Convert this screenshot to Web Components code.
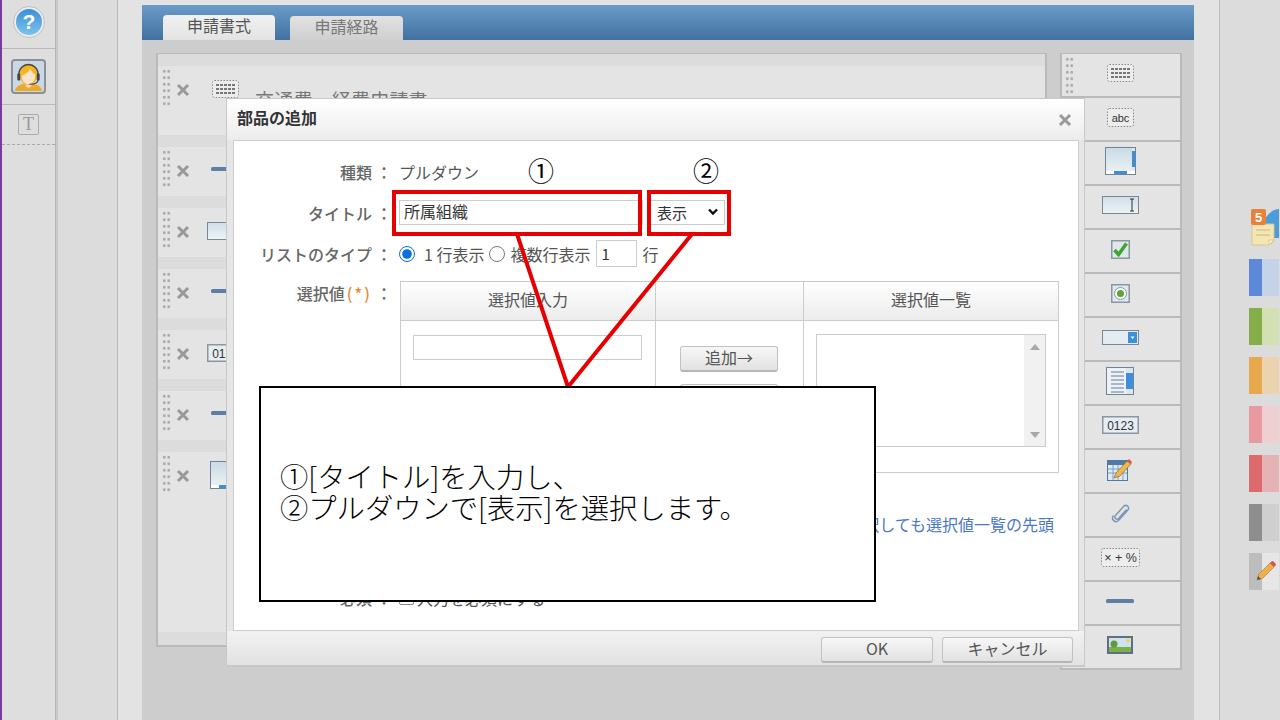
<!DOCTYPE html>
<html lang="ja">
<head>
<meta charset="utf-8">
<title>部品の追加</title>
<style>
  html, body { margin: 0; height: 720px; overflow: hidden; }
  body {
    display: flex;
    position: relative;
    width: 1280px;
    background: #dcdcdc;
    font-family: "Noto Sans CJK JP", "Noto Sans", sans-serif;
    font-size: 16px;
    color: #555;
  }
</style>
</head>
<body>
  <side-rail></side-rail>
  <work-space>
    <form-panel></form-panel>
    <parts-palette></parts-palette>
  </work-space>
  <tile-dock></tile-dock>
  <parts-dialog></parts-dialog>
  <note-overlay>①[タイトル]を入力し、<br>②プルダウンで[表示]を選択します。</note-overlay>

<script>
// icons shared by the form rows and the palette
const ICONS = {
  form: `<svg width="27" height="18" viewBox="0 0 27 18"><rect x=".5" y=".5" width="26" height="17" rx="2" fill="#ededed" stroke="#888" stroke-dasharray="1.5 1.5"/><path d="M4 5h19M4 9h19M4 13h19" stroke="#777" stroke-width="2" stroke-dasharray="3 1"/></svg>`,
  abc: `<svg width="27" height="19" viewBox="0 0 27 19"><rect x=".5" y=".5" width="26" height="18" rx="2" fill="#ededed" stroke="#888" stroke-dasharray="1.5 1.5"/><text x="13.5" y="13.5" text-anchor="middle" font-family="Liberation Sans" font-size="11" fill="#333">abc</text></svg>`,
  area: `<svg width="31" height="28" viewBox="0 0 31 28"><defs><linearGradient id="g" x1="0" y1="0" x2="0" y2="1"><stop offset="0" stop-color="#c9dbe6"/><stop offset="1" stop-color="#eef3f5"/></linearGradient></defs><rect x=".5" y=".5" width="30" height="27" fill="url(#g)" stroke="#6f8296"/><rect x="27" y="1" width="3" height="22" fill="#dfe8ee"/><rect x="27" y="4" width="3" height="16" fill="#3f8fd8"/><rect x="1" y="24" width="29" height="3" fill="#fff"/><rect x="9" y="24" width="13" height="3" fill="#3f8fd8"/></svg>`,
  input: `<svg width="37" height="18" viewBox="0 0 37 18"><defs><linearGradient id="g" x1="0" y1="0" x2="0" y2="1"><stop offset="0" stop-color="#cfdfe8"/><stop offset="1" stop-color="#eef3f5"/></linearGradient></defs><rect x=".5" y=".5" width="36" height="17" fill="url(#g)" stroke="#7a8794"/><path d="M28 3h4M28 15h4M30 3v12" stroke="#333" fill="none"/></svg>`,
  check: `<svg width="19" height="19" viewBox="0 0 19 19"><rect x=".75" y=".75" width="17.5" height="17.5" fill="#dfe8ee" stroke="#8a96a0" stroke-width="1.5"/><path d="M3.500 10l4 4.500 8-11" fill="none" stroke="#3fa52c" stroke-width="3.500"/></svg>`,
  radio: `<svg width="19" height="19" viewBox="0 0 19 19"><rect x=".75" y=".75" width="17.5" height="17.5" fill="#dfe8ee" stroke="#8a96a0" stroke-width="1.5"/><circle cx="9.5" cy="9.5" r="6" fill="#fff" stroke="#8a98a6"/><circle cx="9.5" cy="9.5" r="3.5" fill="#5aa832"/></svg>`,
  drop: `<svg width="37" height="15" viewBox="0 0 37 15"><rect x=".5" y=".5" width="36" height="14" fill="#e4ecf1" stroke="#7a8794"/><rect x="26" y="2" width="9" height="11" fill="#3f8fd8"/><path d="M28.500 6.500h4l-2 2.500z" fill="#fff"/></svg>`,
  list: `<svg width="28" height="28" viewBox="0 0 28 28"><rect x=".5" y=".5" width="27" height="27" fill="#eef2f5" stroke="#6f8296"/><path d="M5 5h13M5 9h13M5 13h13M5 17h13M5 21h13M5 25h13" stroke="#5c7da0"/><rect x="20" y="1" width="7" height="26" fill="#dce6ee"/><rect x="20" y="6" width="7" height="16" fill="#3f8fd8"/></svg>`,
  num: `<svg width="37" height="18" viewBox="0 0 37 18"><rect x=".75" y=".75" width="35.500" height="16.500" fill="#e6eef3" stroke="#8a96a0" stroke-width="1.5"/><text x="18.500" y="13.500" text-anchor="middle" font-family="Liberation Sans" font-size="12" fill="#333">0123</text></svg>`,
  date: `<svg width="26" height="24" viewBox="0 0 26 24"><rect x=".5" y="3.500" width="20" height="20" fill="#dfe9f2" stroke="#4f7aa5"/><rect x="1" y="3" width="20" height="5" fill="#4f7aa5"/><path d="M1 12h19M1 16h19M6 8v15M11 8v15M16 8v15" stroke="#7fa0c0"/><path d="M7 21l2-5L20 4l4 3-11 12z" fill="#edb84e" stroke="#8a6a2a" stroke-width=".7"/><path d="M20 4l2-2 3 3-1 2z" fill="#d9534f"/></svg>`,
  clip: `<svg width="19" height="21" viewBox="0 0 19 21"><path d="M15 6L7 15c-2 2-5-1-3-3l8-9c3-3 7 1 4 4l-9 10c-3 3-8-1-5-5" transform="translate(.5 .5)" fill="none" stroke="#7f98b4" stroke-width="1.500"/></svg>`,
  calc: `<svg width="39" height="19" viewBox="0 0 39 19"><rect x=".5" y=".5" width="38" height="18" rx="2" fill="#ededed" stroke="#888" stroke-dasharray="1.5 1.5"/><text x="19.500" y="14" text-anchor="middle" font-family="Liberation Sans" font-size="12.500" fill="#333">× + %</text></svg>`,
  line: `<svg width="28" height="6" viewBox="0 0 28 6"><rect y="1" width="28" height="4" rx="1.500" fill="#5d7fa6"/></svg>`,
  image: `<svg width="26" height="18" viewBox="0 0 26 18"><rect x="1" y="1" width="24" height="16" fill="#cfe3ef" stroke="#5d6f80" stroke-width="2"/><rect x="2" y="11" width="22" height="5" fill="#7ab04a"/><circle cx="7" cy="8" r="3.500" fill="#5f9a3c"/><circle cx="21" cy="4.500" r="1.800" fill="#f3d24a"/></svg>`,
};

class PartIcon extends HTMLElement {
  constructor() {
    super();
    this._root = this.attachShadow({ mode: "open" });
    this._root.innerHTML = `
      <style>:host { display: flex; flex: none; } svg { display: block; }</style>
      ${ICONS[this.getAttribute("name")] || ""}`;
  }
}

class SideRail extends HTMLElement {
  constructor() {
    super();
    this._root = this.attachShadow({ mode: "open" });
    this._root.innerHTML = `
      <style>
        :host {
          display: flex; flex-direction: column; flex: none;
          width: 53px; height: 720px;
          border-left: 2px solid #7a3a98;
          background: #dedede;
          box-shadow: 1px 0 0 #b5b5b5, 3px 0 0 #c8c8c8;
          margin-right: 3px;
        }
        .cell { display: flex; align-items: center; justify-content: center; border-bottom: 1px solid #b9b9b9; }
        .help { height: 44px; padding-bottom: 4px; }
        .face { height: 55px; }
        .text { height: 39px; border-bottom: 1px dashed #aaa; }
        .t {
          width: 19px; height: 19px; border: 1px solid #aaa; border-radius: 2px;
          font: 18px/19px "Liberation Serif", serif; color: #999; text-align: center;
        }
      </style>
      <div class="cell help">
        <svg width="32" height="32" viewBox="0 0 32 32">
          <defs><linearGradient id="b" x1="0" y1="0" x2="0" y2="1"><stop offset="0" stop-color="#3b8fd6"/><stop offset="1" stop-color="#7cc2ee"/></linearGradient></defs>
          <circle cx="16" cy="16" r="15.500" fill="#ececec" stroke="#c0c0c0"/>
          <circle cx="16" cy="16" r="13" fill="url(#b)"/>
          <text x="16" y="23" text-anchor="middle" font-family="Liberation Sans" font-weight="bold" font-size="21" fill="#fff">?</text>
        </svg>
      </div>
      <div class="cell face">
        <svg width="35" height="35" viewBox="0 0 36 36">
          <rect x="1" y="1" width="34" height="34" rx="3" fill="#c9d8e4" stroke="#8a8f94" stroke-width="2"/>
          <path d="M4 33c1-6 8-8 14-8s13 2 14 8z" fill="#eda928"/>
          <path d="M15 23h6v5l-3 2-3-2z" fill="#f9dcc4"/>
          <ellipse cx="18" cy="16" rx="9" ry="11" fill="#f6b51f"/>
          <path d="M11 17c3-1 7-3 9-7 1 3 3 5 5 6 0 6-3 10-7 10s-7-4-7-9z" fill="#fbe3cf"/>
          <path d="M8 17c0-15 20-15 20 0" fill="none" stroke="#444" stroke-width="1.500"/>
          <rect x="6.500" y="15" width="3" height="7" rx="1" fill="#444"/>
          <rect x="26.500" y="15" width="3" height="7" rx="1" fill="#444"/>
          <path d="M28 21c0 4-4 5-9 5" fill="none" stroke="#444" stroke-width="1.200"/>
        </svg>
      </div>
      <div class="cell text"><div class="t">T</div></div>`;
  }
}

class WorkSpace extends HTMLElement {
  constructor() {
    super();
    this._root = this.attachShadow({ mode: "open" });
    this._root.innerHTML = `
      <style>
        :host {
          display: block; flex: none;
          box-sizing: border-box;
          width: 1103px; height: 720px;
          margin-left: 59px;
          padding: 5px 25px 0 24px;
          background: #e3e3e3;
          border-left: 1px solid #bbb;
          border-right: 1px solid #bbb;
        }
        .panel { height: 715px; background: #cdcdcd; }
        .bar {
          display: flex; align-items: flex-end; gap: 15px;
          box-sizing: border-box; height: 35px; padding-left: 21px;
          background: linear-gradient(#6b9cc8, #41719f);
        }
        .tab {
          box-sizing: border-box; width: 112px; height: 25px;
          border-radius: 4px 4px 0 0;
          background: linear-gradient(#f1f1f1, #e3e3e3);
          text-align: center; font-size: 16px; line-height: 21px; color: #555;
        }
        .tab.off { width: 113px; height: 24px; line-height: 20px; background: linear-gradient(#e2e2e2, #cfcfcf); color: #777; }
        .body { display: flex; gap: 13px; padding: 13px 13px 0 14px; align-items: flex-start; }
      </style>
      <div class="panel">
        <div class="bar"><div class="tab">申請書式</div><div class="tab off">申請経路</div></div>
        <div class="body"><slot></slot></div>
      </div>`;
  }
}

class FormRow extends HTMLElement {
  constructor() {
    super();
    this._root = this.attachShadow({ mode: "open" });
    this._root.innerHTML = `
      <style>
        :host { display: block; box-sizing: border-box; background: #e4e4e4; height: 49px; position: relative; padding: 2px 0 0 4px; }
        .line { display: flex; align-items: flex-start; }
        .grip {
          flex: none; width: 9px; height: 39px;
          background: radial-gradient(circle, #a8a8a8 1.2px, transparent 1.5px) 0 0 / 4.5px 6.5px;
        }
        .x { flex: none; margin: 15px 0 0 5px; width: 14px; height: 14px; }
        .icon { flex: none; margin-left: var(--icon-gap, 21px); margin-top: var(--icon-top, 0); }
        .name { margin: 20px 0 0 16px; font-size: 19px; line-height: 24px; white-space: nowrap; color: #777; letter-spacing: .2px; }
      </style>
      <div class="line">
        <div class="grip"></div>
        <svg class="x" viewBox="0 0 14 14"><path d="M2 2l10 10M12 2L2 12" stroke="#999" stroke-width="3"/></svg>
        <div class="icon"><slot name="icon"></slot></div>
        <div class="name"><slot></slot></div>
      </div>`;
  }
}

class FormPanel extends HTMLElement {
  constructor() {
    super();
    this._root = this.attachShadow({ mode: "open" });
    this._root.innerHTML = `
      <style>
        :host {
          display: flex; flex-direction: column; gap: 12px; flex: none;
          box-sizing: border-box; width: 891px; height: 594px;
          padding-top: 12px;
          background: #dcdcdc;
          border: solid #bababa; border-width: 1px 2px 2px 2px;
        }
      </style>
      <form-row style="height:69px;--icon-gap:22px;--icon-top:12px"><part-icon slot="icon" name="form"></part-icon>交通費　経費申請書</form-row>
      <form-row style="--icon-top:17px"><part-icon slot="icon" name="line"></part-icon></form-row>
      <form-row style="--icon-gap:17px;--icon-top:12px"><part-icon slot="icon" name="input"></part-icon></form-row>
      <form-row style="--icon-top:17px"><part-icon slot="icon" name="line"></part-icon></form-row>
      <form-row style="--icon-gap:17px;--icon-top:12px"><part-icon slot="icon" name="num"></part-icon></form-row>
      <form-row style="--icon-top:17px"><part-icon slot="icon" name="line"></part-icon></form-row>
      <form-row style="height:180px;--icon-gap:20px;--icon-top:7px"><part-icon slot="icon" name="area"></part-icon></form-row>`;
  }
}

class PartsPalette extends HTMLElement {
  constructor() {
    super();
    this._root = this.attachShadow({ mode: "open" });
    const names = ["form", "abc", "area", "input", "check", "radio", "drop", "list", "num", "date", "clip", "calc", "line", "image"];
    this._root.innerHTML = `
      <style>
        :host {
          display: grid; grid-auto-rows: 44px; flex: none;
          box-sizing: border-box; width: 122px; height: 617px;
          background: #e4e4e4;
          border: solid #bababa; border-width: 1px 2px 0 2px;
        }
        .item {
          position: relative; box-sizing: border-box; padding: 0 2px 4px 0;
          display: flex; align-items: center; justify-content: center;
          border-bottom: 2px solid #bababa;
        }
        .grip {
          position: absolute; left: 3px; top: 2px; width: 9px; height: 39px;
          background: radial-gradient(circle, #a8a8a8 1.2px, transparent 1.5px) 0 0 / 4.5px 6.5px;
        }
      </style>
      ${names.map((n, i) => `<div class="item">${i === 0 ? '<div class="grip"></div>' : ""}<part-icon name="${n}"></part-icon></div>`).join("")}`;
  }
}

class TileDock extends HTMLElement {
  constructor() {
    super();
    this._root = this.attachShadow({ mode: "open" });
    const tiles = [
      ["#5e88d8", "#c5d3e9"], ["#85ae4a", "#d3e0b4"], ["#e6a84e", "#ecd3b0"],
      ["#e89aa0", "#eed0d2"], ["#dd6a6c", "#e5b3b5"], ["#8e8e8e", "#cfcfcf"],
    ];
    this._root.innerHTML = `
      <style>
        :host {
          display: flex; flex-direction: column; gap: 12px; flex: none;
          box-sizing: border-box; width: 59px; height: 720px;
          padding: 208px 0 0 29px;
          background: #dcdcdc; overflow: hidden;
        }
        .note { width: 30px; height: 38px; margin-bottom: 1px; }
        .tile { position: relative; display: flex; width: 30px; height: 37px; flex: none; }
        .tile i { width: 13px; }
        .tile b { flex: 1; }
        .pen { position: absolute; left: 7px; top: 8px; }
        svg { display: block; }
      </style>
      <div class="note">
        <svg width="30" height="38" viewBox="0 0 30 38">
          <path d="M12 30C12 10 22 1 30 1v29z" fill="#4c9bdc"/>
          <path d="M3 16h22v17l-5 4H3z" fill="#f3e6b4" stroke="#d8c68c"/>
          <path d="M7 22h14M7 27h14" stroke="#c9b77c"/>
          <path d="M20 37v-5h5z" fill="#fff8dc" stroke="#d8c68c"/>
          <rect x="2" y="1" width="15" height="16" rx="2" fill="#e8813a"/>
          <text x="9.500" y="14" text-anchor="middle" font-family="Liberation Sans" font-weight="bold" font-size="13" fill="#fff">5</text>
        </svg>
      </div>
      ${tiles.map(([a, b]) => `<div class="tile"><i style="background:${a}"></i><b style="background:${b}"></b></div>`).join("")}
      <div class="tile"><i style="background:#bdbdbd"></i><b style="background:#e6e6e6"></b>
        <svg class="pen" width="20" height="20" viewBox="0 0 20 20">
          <path d="M1 19l1.500-5.500L14 2l4 4L6.500 17.500z" fill="#eeb04c" stroke="#a87a2a" stroke-width=".6"/>
          <path d="M14 2l1.500-1.500a1.500 1.500 0 0 1 2 0l2 2a1.500 1.500 0 0 1 0 2L18 6z" fill="#d9534f"/>
          <path d="M1 19l1-4 3 3z" fill="#555"/>
        </svg>
      </div>`;
  }
}

class AddRow extends HTMLElement {
  constructor() {
    super();
    this._root = this.attachShadow({ mode: "open" });
    this._root.innerHTML = `
      <style>
        :host { display: grid; grid-template-columns: 165px 1fr; align-items: center; min-height: 41px; }
        :host([top]) { align-items: start; }
        .label { display: flex; justify-content: flex-end; align-items: center; padding-right: 7px; font-size: 16px; font-weight: 500; color: #666; white-space: nowrap; }
        .colon { width: 16px; margin-left: 4px; text-align: center; }
        .value { display: flex; align-items: center; min-width: 0; }
      </style>
      <div class="label"><span><slot name="label"></slot></span><span class="colon">：</span></div>
      <div class="value"><slot></slot></div>`;
  }
}

class FakeInput extends HTMLElement {
  constructor() {
    super();
    this._root = this.attachShadow({ mode: "open" });
    this._root.innerHTML = `
      <style>
        :host {
          display: block; box-sizing: border-box; height: 25px; flex: none;
          border: 1px solid #ccc; background: #fff;
          padding-left: 4px; font-size: 16px; line-height: 21px; color: #333;
        }
      </style>
      <slot></slot>`;
  }
}

class PlainButton extends HTMLElement {
  constructor() {
    super();
    this._root = this.attachShadow({ mode: "open" });
    this._root.innerHTML = `
      <style>
        :host {
          display: block; box-sizing: border-box; flex: none; height: 26px;
          border: 1px solid #c2c2c2; border-bottom: 2px solid #b5b5b5; border-radius: 3px;
          background: linear-gradient(#f7f7f7, #e2e2e2);
          text-align: center; font-size: 16px; line-height: 20px; color: #555;
        }
      </style>
      <slot></slot>`;
  }
}

class PickTable extends HTMLElement {
  constructor() {
    super();
    this._root = this.attachShadow({ mode: "open" });
    this._root.innerHTML = `
      <style>
        :host {
          display: grid; grid-template-columns: 255px 148px 1fr; grid-template-rows: 39px 1fr;
          box-sizing: border-box; width: 659px; height: 192px; margin-left: 1px;
          border: 1px solid #ccc;
        }
        .head {
          border-bottom: 1px solid #ccc; border-right: 1px solid #ccc;
          background: linear-gradient(#fff, #ececec);
          text-align: center; font-size: 16px; line-height: 35px; color: #555;
        }
        .head.end { border-right: 0; }
        .cell { border-right: 1px solid #ccc; }
        .left { padding: 14px 0 0 12px; }
        .left fake-input { width: 229px; }
        .mid { display: flex; flex-direction: column; gap: 12px; padding: 25px 0 0 24px; }
        .mid plain-button { width: 98px; }
        .right { border-right: 0; padding: 13px 12px 0 12px; }
        .list { display: flex; justify-content: flex-end; box-sizing: border-box; height: 113px; border: 1px solid #ccc; }
        .scroll { width: 21px; background: #f1f1f1; display: flex; flex-direction: column; justify-content: space-between; padding: 9px 0 8px; box-sizing: border-box; align-items: center; }
        .scroll svg { display: block; }
      </style>
      <div class="head">選択値入力</div><div class="head"></div><div class="head end">選択値一覧</div>
      <div class="cell left"><fake-input></fake-input></div>
      <div class="cell mid"><plain-button>追加→</plain-button><plain-button>←削除</plain-button></div>
      <div class="cell right">
        <div class="list"><div class="scroll">
          <svg width="10" height="6"><path d="M5 0l5 6H0z" fill="#a8a8a8"/></svg>
          <svg width="10" height="6"><path d="M0 0h10L5 6z" fill="#a8a8a8"/></svg>
        </div></div>
      </div>`;
  }
}

class PartsDialog extends HTMLElement {
  constructor() {
    super();
    this._root = this.attachShadow({ mode: "open" });
    this._root.innerHTML = `
      <style>
        :host {
          position: absolute; left: 226px; top: 98px;
          display: flex; flex-direction: column;
          box-sizing: border-box; width: 859px; height: 569px;
          border: 1px solid #c8c8c8; border-bottom-width: 2px;
          background: #e6e6e6;
        }
        .title {
          display: flex; justify-content: space-between; align-items: center; flex: none;
          box-sizing: border-box; height: 41px; padding: 0 12px 5px 10px;
          background: linear-gradient(#fff, #ececec);
          font-size: 16px; font-weight: 700; color: #333;
        }
        .title svg { margin-top: 6px; }
        .body {
          flex: none; box-sizing: border-box; height: 491px; margin: 0 5px 0 6px;
          padding-top: 10px;
          background: #fff; border: 1px solid #ccc;
        }
        .gap { height: 7px; }
        .row-blue { display: flex; justify-content: flex-end; padding-right: 24px; margin-top: 40px; font-size: 16px; line-height: 22px; color: #4a78c8; white-space: nowrap; }
        .foot { display: flex; justify-content: flex-end; gap: 9px; padding: 6px 11px 0 0; flex: 1; background: linear-gradient(#f2f2f2, #e2e2e2); }
        .foot plain-button:first-child { width: 112px; }
        .foot plain-button:last-child { width: 131px; }
        .title-field { width: 244px; }
        .sel { position: relative; flex: none; margin-left: 6px; }
        .sel svg { position: absolute; right: 7px; top: 8px; }
        select {
          display: block; width: 76px; height: 25px; box-sizing: border-box;
          appearance: none;
          border: 1px solid #ccc; border-radius: 0; background: #fff; padding: 0 0 0 7px;
          font: 15px "Noto Sans CJK JP", sans-serif; color: #333;
        }
        input[type=radio] { margin: 0; width: 16px; height: 16px; flex: none; accent-color: #0a6fe0; }
        .opts { font-size: 16px; color: #555; white-space: nowrap; }
        .num { width: 41px; height: 27px; margin: 0 5px 0 6px; font-size: 15px; line-height: 25px; }
        .req { color: #e98a3a; margin-left: 2px; letter-spacing: 2px; }
        .check { display: flex; align-items: center; gap: 3px; font-size: 16px; color: #555; }
        .check i { display: block; width: 13px; height: 13px; border: 1px solid #888; border-radius: 2px; background: #fff; }
      </style>
      <div class="title">部品の追加
        <svg width="14" height="14" viewBox="0 0 14 14"><path d="M2 2l10 10M12 2L2 12" stroke="#999" stroke-width="3"/></svg>
      </div>
      <div class="body">
        <add-row><span slot="label">種類</span>プルダウン</add-row>
        <add-row><span slot="label">タイトル</span>
          <fake-input class="title-field">所属組織</fake-input>
          <span class="sel">
            <select><option>表示</option><option>非表示</option></select>
            <svg width="10" height="8" viewBox="0 0 10 8"><path d="M1 1.500l4 4 4-4" fill="none" stroke="#111" stroke-width="2.400"/></svg>
          </span>
        </add-row>
        <add-row><span slot="label">リストのタイプ</span>
          <input type="radio" name="kind" checked>
          <span class="opts" style="margin:0 5px 0 9px">1 行表示</span>
          <input type="radio" name="kind">
          <span class="opts" style="margin-left:5px">複数行表示</span>
          <fake-input class="num">1</fake-input>
          <span class="opts">行</span>
        </add-row>
        <div class="gap"></div>
        <add-row top><span slot="label">選択値<span class="req">(*)</span></span><pick-table></pick-table></add-row>
        <div class="row-blue">値を選択しても選択値一覧の先頭</div>
        <add-row style="margin-top:42px"><span slot="label">必須</span><span class="check"><i></i>入力を必須にする</span></add-row>
      </div>
      <div class="foot"><plain-button>OK</plain-button><plain-button>キャンセル</plain-button></div>`;
  }
}

// callout box, red frames and the two leader lines, all on top of the dialog
class NoteOverlay extends HTMLElement {
  constructor() {
    super();
    this._root = this.attachShadow({ mode: "open" });
    this._root.innerHTML = `
      <style>
        :host { position: absolute; left: 0; top: 0; width: 1280px; height: 720px; pointer-events: none; }
        .frame { position: absolute; box-sizing: border-box; top: 190px; height: 46px; border: 4px solid #e60000; }
        .num { position: absolute; top: 152px; width: 32px; text-align: center; font-size: 26px; line-height: 36px; color: #000; }
        svg { position: absolute; left: 0; top: 0; }
        .box {
          position: absolute; left: 259px; top: 386px;
          box-sizing: border-box; width: 617px; height: 216px;
          display: flex; align-items: center;
          padding: 0 0 7px 19px;
          border: 2px solid #000; background: #fff;
          font-size: 28.300px; font-weight: 300; line-height: 31px; color: #000; white-space: nowrap;
        }
      </style>
      <svg width="1280" height="720"><path d="M517 234l51 153 124-153" fill="none" stroke="#e60000" stroke-width="4"/></svg>
      <div class="frame" style="left:392px;width:250px"></div>
      <div class="frame" style="left:647px;width:84px"></div>
      <div class="num" style="left:525px">①</div>
      <div class="num" style="left:690px">②</div>
      <div class="box"><div><slot></slot></div></div>`;
  }
}

customElements.define("part-icon", PartIcon);
customElements.define("side-rail", SideRail);
customElements.define("work-space", WorkSpace);
customElements.define("form-row", FormRow);
customElements.define("form-panel", FormPanel);
customElements.define("parts-palette", PartsPalette);
customElements.define("tile-dock", TileDock);
customElements.define("add-row", AddRow);
customElements.define("fake-input", FakeInput);
customElements.define("plain-button", PlainButton);
customElements.define("pick-table", PickTable);
customElements.define("parts-dialog", PartsDialog);
customElements.define("note-overlay", NoteOverlay);
</script>
</body>
</html>
